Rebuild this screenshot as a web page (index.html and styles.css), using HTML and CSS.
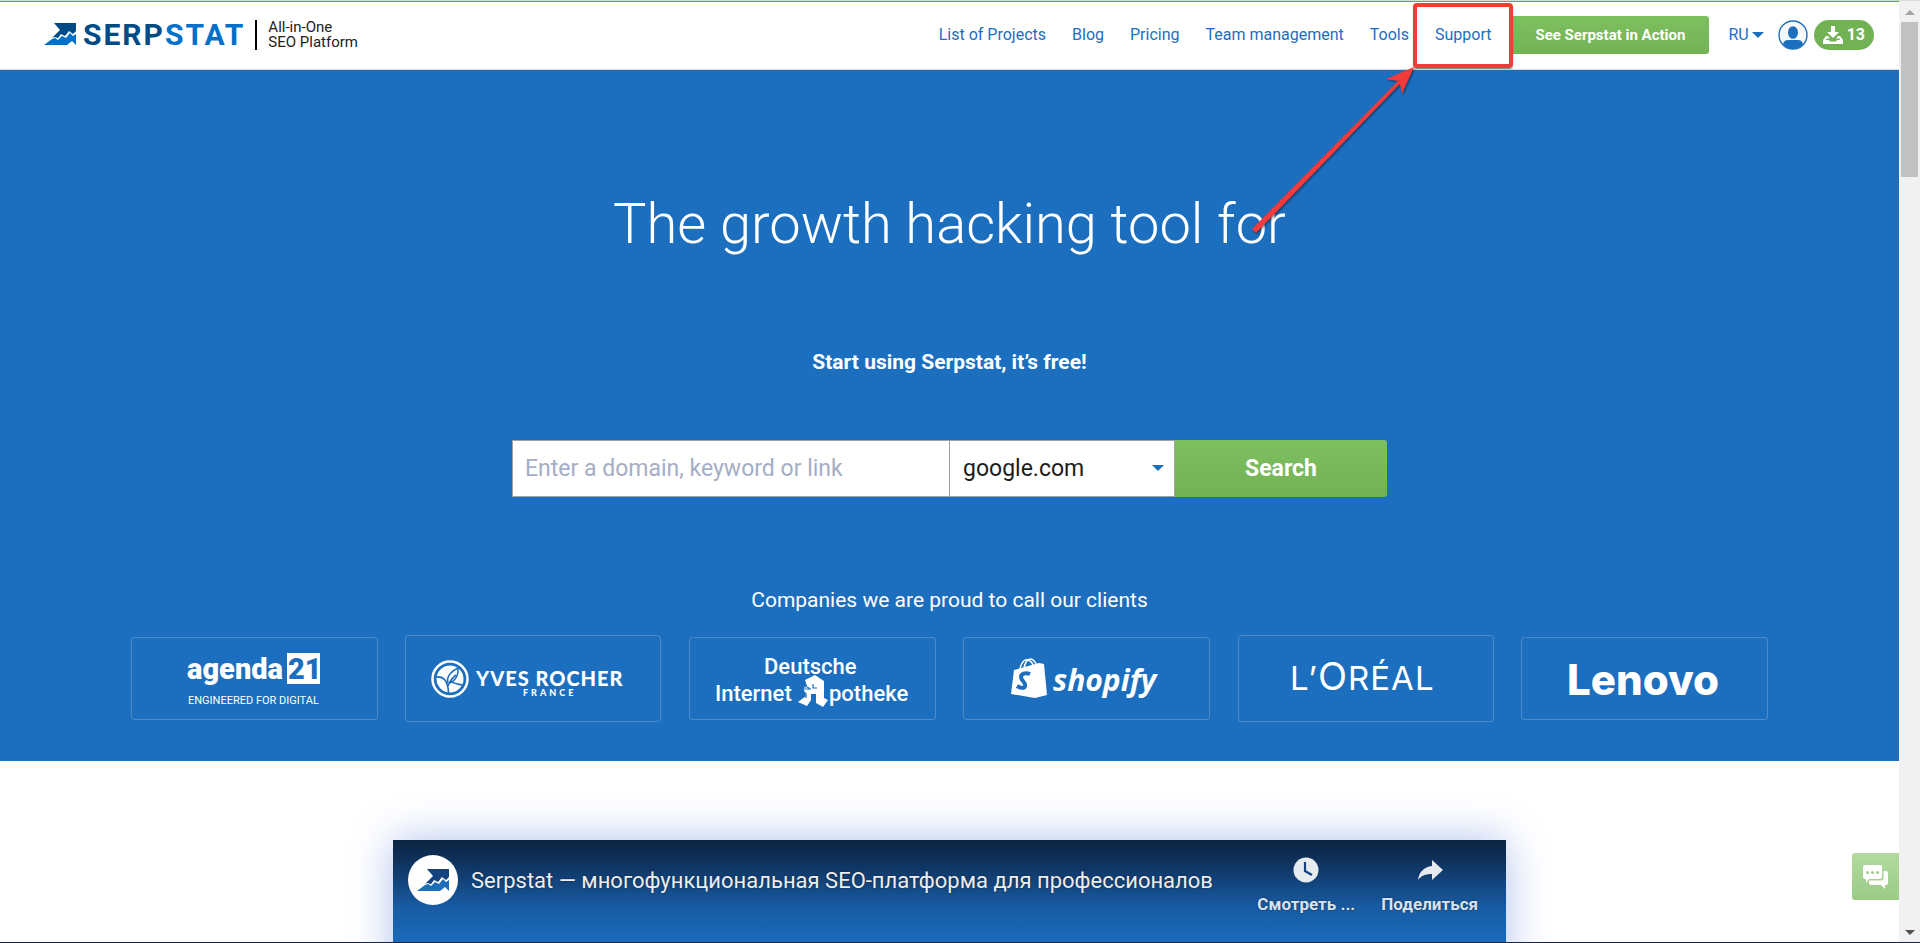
FILE: index.html
```html
<!DOCTYPE html>
<html lang="en">
  <head>
    <meta charset="UTF-8" />
    <meta name="viewport" content="width=device-width, initial-scale=1.0" />
    <title>Serpstat</title>
    <link rel="stylesheet" href="styles.css">
  </head>
  <body>
    <div class="window">
      <div class="page">
        <header class="header">
          <a class="logo" href="#">
            <svg class="logo-icon" width="32" height="23" viewBox="0 0 32 23">
              <path fill="#004a86" d="M10 0H32V8l-3 3-4-3-4 5-4-2-3 4-4-1-2 1 8-8z" />
              <path fill="#0070c9" d="M0 22l8-6 3-1 3 2 4-4 4 2 4-5 3 3 3-2V22l-4-4-5 4z" />
            </svg>
            <span class="logo-name">SERP<span class="logo-light">STAT</span></span>
            <span class="logo-slogan">All-in-One<br />SEO Platform</span>
          </a>
          <nav class="nav">
            <a href="#">List of Projects</a>
            <a href="#">Blog</a>
            <a href="#">Pricing</a>
            <a href="#">Team management</a>
            <a href="#">Tools</a>
            <a class="nav-marked" href="#">Support
              <span class="mark-frame"></span>
              <svg class="mark-arrow" width="170" height="170" viewBox="0 0 170 170">
                <path fill="#f43b3b" d="M4 162L150 14l-12-2 28-12-12 27-2-10L8 166z" />
              </svg>
            </a>
          </nav>
          <button class="btn btn-demo" type="button">See Serpstat in Action</button>
          <div class="account">
            <button class="lang" type="button">RU<span class="caret"></span></button>
            <a class="user" href="#" aria-label="Profile">
              <svg width="30" height="30" viewBox="0 0 30 30">
                <circle cx="15" cy="15" r="14" fill="#f8f8f8" stroke="#1c6ebe" stroke-width="1.4" />
                <ellipse cx="15" cy="12.500" rx="5" ry="6.300" fill="#1c6ebe" />
                <path fill="#1c6ebe" d="M5 24q1-4 5-4h10q4 0 5 4-4 5-10 5t-10-5z" />
              </svg>
            </a>
            <a class="downloads" href="#">
              <svg width="20" height="18" viewBox="0 0 20 18" fill="#fff">
                <path d="M8 0h4v6h4l-6 6-6-6h4z" />
                <path d="M3 10h2l2 2.500H3.500L3 14h3l1 1.500h6l1-1.500h3l-.5-1.500H13l2-2.500h2l3 4v4H0v-4z" />
              </svg>
              13
            </a>
          </div>
        </header>

        <section class="hero">
          <h1>The growth hacking tool for</h1>
          <p class="hero-start">Start using Serpstat, it’s free!</p>
          <form class="search">
            <input class="search-input" type="text" aria-label="Domain, keyword or link" placeholder="Enter a domain, keyword or link" />
            <div class="search-engine">
              <select aria-label="Search engine">
                <option>google.com</option>
              </select>
            </div>
            <button class="btn btn-search" type="button">Search</button>
          </form>
          <p class="clients-title">Companies we are proud to call our clients</p>
          <div class="clients">
            <div class="client">
              <svg width="247" height="83" viewBox="0 0 247 83">
                <text class="agenda" x="56" y="42">agenda</text>
                <rect x="156" y="16" width="33" height="31" />
                <text class="agenda-num" x="157" y="42">21</text>
                <text class="agenda-sub" x="57" y="67">ENGINEERED FOR DIGITAL</text>
              </svg>
            </div>
            <div class="client client-big">
              <svg width="256" height="87" viewBox="0 0 256 87">
                <circle cx="45" cy="44" r="17.500" fill="none" stroke="#fff" stroke-width="2.500" />
                <circle cx="45" cy="44" r="13.500" />
                <g class="leaf">
                  <path d="M43 48C41 42 46 36 53 33c1 7-3 13-8 15" />
                  <path d="M31 42c7-1 12 3 12.500 16" />
                  <path d="M43 51c3-7 5-9 8-11" />
                  <path d="M44 47c5 0 9 3 14 3" />
                </g>
                <text class="yves" x="71" y="51">YVES ROCHER</text>
                <text class="yves-sub" x="118" y="61">FRANCE</text>
              </svg>
            </div>
            <div class="client">
              <svg width="247" height="83" viewBox="0 0 247 83">
                <text class="apotheke" x="75" y="37">Deutsche</text>
                <text class="apotheke" x="26" y="64">Internet</text>
                <text class="apotheke" x="140" y="64">potheke</text>
                <path d="M116 43l10-5 9 6v17l4 2-5 7-7-4v-9h-5v6l-4 6-9-4 8-6-3-9 4-1z" />
                <path class="snake" d="M124 47v4h4M113 52c3-4 6-2 8 0h-8q0 4 4 4M117 56v5" />
              </svg>
            </div>
            <div class="client">
              <svg width="247" height="83" viewBox="0 0 247 83">
                <path d="M51 33l25-7 5 1 3 31-12 3-24-4z" />
                <path class="handle" d="M57 32c1-7 5-10 8-9s5 4 5 7M61 31c1-5 3-9 7-9 4 1 5 4 6 8" />
                <path class="bag-s" d="M67 37c-5-2-9 0-9 3 0 4 5 5 4 9-1 3-5 2-8 0" />
                <text class="shopify" x="90" y="54">shopify</text>
              </svg>
            </div>
            <div class="client client-big">
              <svg width="256" height="87" viewBox="0 0 256 87">
                <text class="loreal" x="52" y="55">L’<tspan class="loreal-o">O</tspan>RÉAL</text>
              </svg>
            </div>
            <div class="client">
              <svg width="247" height="83" viewBox="0 0 247 83">
                <text class="lenovo" x="46" y="58">Lenovo</text>
              </svg>
            </div>
          </div>
        </section>

        <section class="video">
          <a class="video-avatar" href="#" aria-label="Serpstat">
            <svg width="32" height="23" viewBox="0 0 32 23">
              <path fill="#12427f" d="M10 0H32V8l-3 3-4-3-4 5-4-2-3 4-4-1-2 1 8-8z" />
              <path fill="#1c6eb8" d="M0 22l8-6 3-1 3 2 4-4 4 2 4-5 3 3 3-2V22l-4-4-5 4z" />
            </svg>
          </a>
          <a class="video-title" href="#">Serpstat — многофункциональная SEO-платформа для профессионалов</a>
          <button class="video-action" type="button">
            <svg width="36" height="36" viewBox="0 0 36 36">
              <circle cx="18" cy="18" r="12.500" />
              <path d="M17 10v9l7 4" fill="none" stroke="#12427f" stroke-width="2.200" />
            </svg>
            Смотреть ...
          </button>
          <button class="video-action" type="button">
            <svg width="36" height="36" viewBox="0 0 36 36">
              <path d="M20 8l11 10-11 10v-6C13 22 9 24 6 28c1-8 6-13 14-14z" />
            </svg>
            Поделиться
          </button>
        </section>

        <button class="chat" type="button" aria-label="Chat">
          <svg width="26" height="24" viewBox="0 0 26 24">
            <path fill="#fff" d="M2 0h15q2 0 2 2v10q0 2-2 2H6l-3 4v-4H2q-2 0-2-2V2q0-2 2-2z" />
            <path fill="#fff" d="M20.500 6H23q2 0 2 2v10q0 2-2 2h-1v4l-4-4H8q-2 0-2-2v-2.500h12q2.500 0 2.500-2.500z" />
            <g fill="#a3d08f"><circle cx="4.500" cy="7.500" r="1.600" /><circle cx="9.500" cy="7.500" r="1.600" /><circle cx="14.500" cy="7.500" r="1.600" /></g>
          </svg>
        </button>
      </div>

      <div class="scrollbar">
        <span class="arrow arrow-up"></span>
        <span class="thumb"></span>
        <span class="arrow arrow-down"></span>
      </div>
    </div>
  </body>
</html>
```
FILE: styles.css
```css
* {
  box-sizing: border-box;
}
body {
  margin: 0;
  font-family: Roboto, sans-serif;
  font-size: 16px;
  color: #1c1c1c;
  background: #fff;
}
a {
  color: #1c6ebe;
  text-decoration: none;
}
button,
input,
select {
  font-family: inherit;
  border: none;
  margin: 0;
}
button {
  cursor: pointer;
}
svg {
  display: block;
}
.window {
  display: flex;
  height: 100vh;
  overflow: hidden;
  border-top: 1px solid #d9d9d9;
  border-bottom: 1px solid #1b2540;
}
.page {
  position: relative;
  flex: 1;
  min-width: 0;
}

/* header */
.header {
  display: flex;
  align-items: center;
  height: 69px;
  padding: 0 25px 2px 44px;
  border-top: 1px solid #5fad41;
  border-bottom: 1px solid #d5dbe3;
}
.logo {
  display: flex;
  align-items: center;
  margin-right: auto;
}
.logo-name {
  margin-left: 7px;
  font-size: 30px;
  line-height: 30px;
  font-weight: 700;
  letter-spacing: 2px;
  color: #004a86;
}
.logo-light {
  color: #0070c9;
}
.logo-slogan {
  margin-left: 10px;
  padding-left: 11px;
  border-left: 2px solid #000;
  font-size: 15px;
  line-height: 15px;
  color: #222;
}
.nav {
  display: flex;
  gap: 26px;
  margin-right: 20px;
}
.nav-marked {
  position: relative;
}
.mark-frame {
  position: absolute;
  inset: -22px -22px -24px;
  border: 4px solid #f43b3b;
  border-radius: 4px;
  box-shadow: 0 1px 1px rgba(0, 0, 0, 0.5);
}
.mark-arrow {
  position: absolute;
  top: 42px;
  right: 73px;
  filter: drop-shadow(1px 1px 1px rgba(0, 0, 0, 0.5));
}
.btn {
  color: #fff;
  font-weight: 700;
  background: linear-gradient(#7ec060, #73b155);
  border-radius: 0 3px 3px 0;
}
.btn-demo {
  height: 38px;
  padding: 0 24px;
  font-size: 15px;
}
.account {
  display: flex;
  align-items: center;
  margin-left: 19px;
}
.lang {
  display: flex;
  align-items: center;
  gap: 3px;
  padding: 0;
  font-size: 16px;
  color: #1c6ebe;
  background: none;
}
.caret,
.search-engine::after {
  border: 6px solid transparent;
  border-top-color: #1c6ebe;
  border-bottom: none;
}
.user {
  margin: 0 6px 0 14px;
}
.downloads {
  display: flex;
  align-items: center;
  gap: 4px;
  height: 30px;
  padding: 0 9px;
  border-radius: 15px;
  font-weight: 700;
  color: #fff;
  background: #73b155;
}

/* hero */
.hero {
  padding: 121px 131px 39px;
  text-align: center;
  color: #fff;
  background: #1c6ebe;
}
h1 {
  margin: 0;
  font-size: 56px;
  line-height: 66px;
  font-weight: 300;
}
.hero-start {
  margin: 93px 0 66px;
  font-size: 21px;
  line-height: 24px;
  font-weight: 700;
}
.search {
  display: flex;
  width: 875px;
  height: 57px;
  margin: 0 auto;
}
.search-input,
.search-engine {
  border: 1px solid #a0a0a8;
  border-radius: 0;
  background: #fff;
}
.search-input {
  flex: 1;
  padding: 0 12px;
  font-size: 23px;
}
.search-input::placeholder {
  color: #a5adc6;
}
.search-engine {
  position: relative;
  width: 225px;
  border-left: none;
}
.search-engine select {
  width: 100%;
  height: 100%;
  padding: 0 13px;
  font-size: 23px;
  color: #1c1c1c;
  background: none;
  appearance: none;
}
.search-engine::after {
  content: "";
  position: absolute;
  top: 24px;
  right: 10px;
}
.btn-search {
  width: 212px;
  font-size: 23px;
}
.clients-title {
  margin: 91px 0 23px;
  font-size: 21px;
  line-height: 24px;
}
.clients {
  display: flex;
  align-items: center;
  justify-content: space-between;
}
.client {
  display: flex;
  justify-content: center;
  border-radius: 4px;
  box-shadow: inset 0 0 0 1px rgba(255, 255, 255, 0.2);
}
.client svg {
  fill: #fff;
}
.agenda,
.agenda-num {
  font-size: 29px;
  font-weight: 900;
}
.agenda-num {
  fill: #1c6ebe;
}
.agenda-sub {
  font-size: 11px;
}
.leaf {
  fill: none;
  stroke: #1c6ebe;
  stroke-width: 1.6;
}
.yves {
  font-family: Lato, sans-serif;
  font-size: 20px;
  font-weight: 900;
  letter-spacing: 1px;
}
.yves-sub {
  font-family: Lato, sans-serif;
  font-size: 9px;
  font-weight: 900;
  letter-spacing: 3px;
}
.apotheke {
  font-size: 22px;
  font-weight: 500;
}
.snake,
.bag-s {
  fill: none;
  stroke: #1c6ebe;
  stroke-width: 1.2;
}
.bag-s {
  stroke-width: 4;
}
.handle {
  fill: none;
  stroke: #fff;
  stroke-width: 1.5;
}
.shopify {
  font-family: "Open Sans", sans-serif;
  font-size: 30px;
  font-weight: 700;
  font-style: italic;
}
.loreal {
  font-family: Inter, sans-serif;
  font-size: 33px;
  letter-spacing: 1px;
}
.loreal-o {
  font-size: 38px;
}
.lenovo {
  font-family: Inter, sans-serif;
  font-size: 42px;
  font-weight: 800;
}

/* video */
.video {
  display: flex;
  align-items: flex-start;
  width: 1113px;
  height: 626px;
  margin: 79px auto 0;
  padding: 15px 20px 0 15px;
  background: linear-gradient(#0b2541, #0e305a 20px, #185ca4 68px, #1a69b8 100px, #1c6ebe 140px);
  box-shadow: 0 0 40px rgba(60, 100, 210, 0.4);
}
.video-avatar {
  display: flex;
  align-items: center;
  justify-content: center;
  width: 50px;
  height: 50px;
  margin-right: 13px;
  border-radius: 50%;
  background: #fff;
}
.video-title {
  margin-right: auto;
  font-size: 22px;
  line-height: 52px;
  white-space: nowrap;
  color: #eee;
  text-shadow: 0 0 2px rgba(0, 0, 0, 0.5);
}
.video-action {
  display: flex;
  flex-direction: column;
  align-items: center;
  padding: 0 8px;
  font-size: 17px;
  line-height: 32px;
  font-weight: 700;
  white-space: nowrap;
  color: #d9e2ec;
  background: none;
  text-shadow: 0 0 2px rgba(0, 0, 0, 0.5);
}
.video-action + .video-action {
  margin-left: 10px;
}
.video-action svg {
  margin-top: -3px;
  fill: #e6ebf0;
}

/* chat button sits over the page */
.chat {
  position: absolute;
  right: 0;
  bottom: 42px;
  display: flex;
  align-items: center;
  justify-content: center;
  width: 47px;
  height: 47px;
  padding: 0;
  border-radius: 3px 0 0 3px;
  background: linear-gradient(#b1db9f, #9bca86);
}

.scrollbar {
  display: flex;
  flex-direction: column;
  align-items: center;
  width: 21px;
  padding: 9px 0 7px;
  background: #f1f1f1;
}
.thumb {
  width: 17px;
  height: 155px;
  margin: 7px 0 auto;
  background: #c1c1c1;
}
.arrow {
  border: 5px solid transparent;
}
.arrow-up {
  border-top: none;
  border-bottom-color: #a3a3a3;
}
.arrow-down {
  border-bottom: none;
  border-top-color: #505050;
}
```
